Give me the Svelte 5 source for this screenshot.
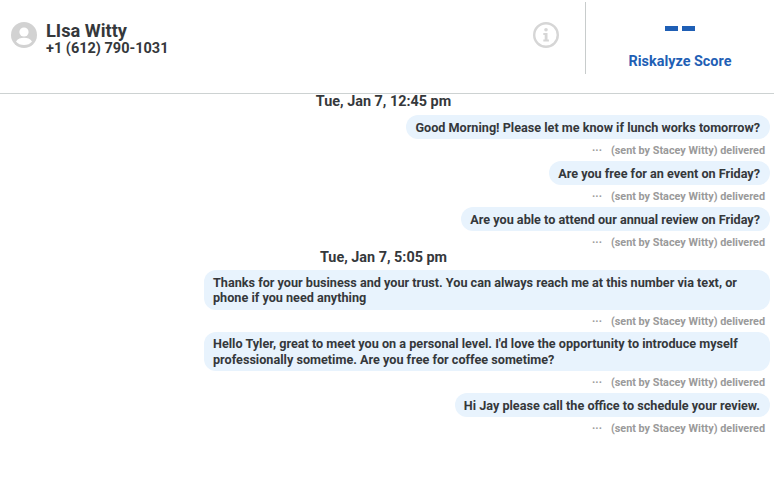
<script>
const groups = [
  {
    date: 'Tue, Jan 7, 12:45 pm',
    messages: [
      'Good Morning! Please let me know if lunch works tomorrow?',
      'Are you free for an event on Friday?',
      'Are you able to attend our annual review on Friday?'
    ]
  },
  {
    date: 'Tue, Jan 7, 5:05 pm',
    messages: [
      'Thanks for your business and your trust. You can always reach me at this number via text, or phone if you need anything',
      "Hello Tyler, great to meet you on a personal level. I'd love the opportunity to introduce myself professionally sometime. Are you free for coffee sometime?",
      'Hi Jay please call the office to schedule your review.'
    ]
  }
];
</script>

<div class="page">
  <header>
    <div class="contact">
      <svg class="avatar" viewBox="0 0 26 26" width="26" height="26" aria-hidden="true">
        <circle cx="13" cy="13" r="13" fill="#d2d2d2" />
        <circle cx="13" cy="10" r="4.6" fill="#fff" />
        <path d="M5 19.5c1.6-2.8 4.8-3.8 8-3.8s6.4 1 8 3.8c-1.8 2.3-4.7 3.6-8 3.6s-6.2-1.3-8-3.6z" fill="#fff" />
      </svg>
      <div class="who">
        <div class="name">LIsa Witty</div>
        <div class="phone">+1 (612) 790-1031</div>
      </div>
    </div>
    <svg class="info" viewBox="0 0 26 26" width="26" height="26" aria-hidden="true">
      <circle cx="13" cy="13" r="11.8" fill="none" stroke="#d6d6d6" stroke-width="2.4" />
      <circle cx="13" cy="7.8" r="1.8" fill="#d6d6d6" />
      <path d="M10.3 11h4.2v6.5h1.4v1.900h-5.600v-1.900h1.400v-4.600h-1.400z" fill="#d6d6d6" />
    </svg>
    <div class="score">
      <div class="dashes"><span></span><span></span></div>
      <div class="score-label">Riskalyze Score</div>
    </div>
  </header>

  {#each groups as group}
    <section>
      <div class="date">{group.date}</div>
      {#each group.messages as message}
        <div class="message">
          <div class="bubble">{message}</div>
          <div class="meta"><span class="more">···</span>(sent by Stacey Witty) delivered</div>
        </div>
      {/each}
    </section>
  {/each}
</div>

<style>
:global(body) {
  background: #fff;
}
.page {
  width: 774px;
  font-family: Roboto, "Liberation Sans", sans-serif;
  font-weight: 700;
  color: #35383b;
}
header {
  height: 93px;
  border-bottom: 1px solid #cdd2d2;
  display: flex;
  align-items: flex-start;
}
.contact {
  flex: 1;
  display: flex;
  align-items: flex-start;
  gap: 9px;
  padding: 21px 0 0 11px;
}
.avatar {
  margin-top: 1px;
}
.name {
  font-size: 18.2px;
  line-height: 20px;
}
.phone {
  font-size: 14.5px;
  line-height: 16px;
}
.info {
  margin: 22px 26px 0 0;
}
.score {
  width: 188px;
  height: 72px;
  margin-top: 2px;
  border-left: 1px solid #c8cccc;
  text-align: center;
  color: #1f5fb5;
}
.dashes {
  display: flex;
  justify-content: center;
  gap: 4px;
  padding-top: 24px;
}
.dashes span {
  width: 13px;
  height: 5px;
  background: #1f5fb5;
}
.score-label {
  font-size: 14.4px;
  line-height: 16px;
  margin-top: 23px;
}
section {
  display: flex;
  flex-direction: column;
  align-items: flex-end;
  padding-right: 4px;
  gap: 3px;
}
.date {
  align-self: stretch;
  padding-right: 3px;
  margin: 1px 0 3px;
  font-size: 14.4px;
  line-height: 14px;
  text-align: center;
}
section + section .date {
  margin: 1px 0 2px;
}
.message {
  display: flex;
  flex-direction: column;
  align-items: flex-end;
  gap: 5px;
  max-width: 566px;
}
.bubble {
  background: #e8f3fd;
  border-radius: 12px;
  padding: 4.75px 10px 3.75px 9px;
  font-size: 12.65px;
  line-height: 15.5px;
}
.meta {
  padding-right: 5px;
  font-size: 10.85px;
  line-height: 14px;
  color: #9a9a9a;
}
.more {
  margin-right: 9px;
}
</style>
